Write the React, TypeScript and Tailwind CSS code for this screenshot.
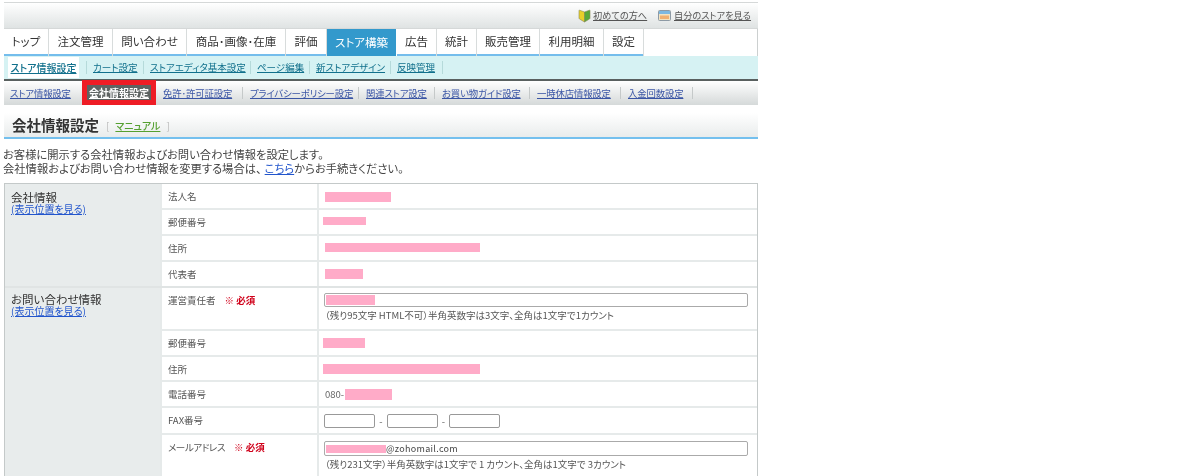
const font = '[font-family:"Noto_Sans_CJK_JP","Liberation_Sans",sans-serif] [font-feature-settings:"palt"]';

const tabs = [
  { label: "トップ", w: "w-[44px]" },
  { label: "注文管理", w: "w-[63px]" },
  { label: "問い合わせ", w: "w-[73px]" },
  { label: "商品･画像･在庫", w: "w-[98px]" },
  { label: "評価", w: "w-[40px]" },
  { label: "ストア構築", w: "w-[69px]", active: true },
  { label: "広告", w: "w-[39px]" },
  { label: "統計", w: "w-[39px]" },
  { label: "販売管理", w: "w-[62px]" },
  { label: "利用明細", w: "w-[63px]" },
  { label: "設定", w: "w-[39px]" },
];

const subNav = [
  { label: "カート設定", w: "w-[43px]" },
  { label: "ストアエディタ基本設定", w: "w-[93px]" },
  { label: "ページ編集", w: "w-[45px]" },
  { label: "新ストアデザイン", w: "w-[67px]" },
  { label: "反映管理", w: "w-[38px]" },
];

const pageNav = [
  { label: "免許･許可証設定", w: "w-[72px]" },
  { label: "プライバシーポリシー設定", w: "w-[101px]" },
  { label: "関連ストア設定", w: "w-[61px]" },
  { label: "お買い物ガイド設定", w: "w-[80px]" },
  { label: "一時休店情報設定", w: "w-[76px]" },
  { label: "入金回数設定", w: "w-[57px]" },
];

function Pink({ className }: { className: string }) {
  return <span className={`block bg-[#ffabc8] ${className}`} />;
}

function Required() {
  return <span className="ml-[9px] font-bold text-[#d0021b]">※ 必須</span>;
}

function Row({
  label,
  h,
  children,
  last,
}: {
  label: React.ReactNode;
  h: string;
  children: React.ReactNode;
  last?: boolean;
}) {
  return (
    <div className={`flex ${h} ${last ? "" : "border-b-2 border-[#e6eaea]"}`}>
      <div className="w-[155px] shrink-0 pl-[6px] pt-[5px] text-[9.5px] leading-[14px] text-[#555]">{label}</div>
      <div className="w-[2px] shrink-0 bg-[#e6eaea]" />
      <div className="min-w-0 flex-1">{children}</div>
    </div>
  );
}

function SectionHead({ title, pt }: { title: string; pt: string }) {
  return (
    <div className={`w-[155px] shrink-0 bg-[#e8ecec] pl-[6px] ${pt}`}>
      <div className="text-[11.5px] leading-[12px] text-[#333]">{title}</div>
      <a className="block text-[10px] leading-[11px] text-[#2255cc] underline">(表示位置を見る)</a>
    </div>
  );
}

function FaxInput() {
  return <span className="block h-[14px] w-[51px] rounded-[2px] border border-[#999] bg-white" />;
}

export default function App() {
  return (
    <div className={`h-[476px] w-[1200px] overflow-hidden bg-white pl-[4px] pt-[2px] blur-[0.3px] ${font}`}>
      <div className="w-[754px]">
        <div className="flex h-[27px] items-center justify-end border-y border-[#d5d8d8] bg-gradient-to-b from-white to-[#dfe3e3] pr-[7px] text-[9.2px] text-[#555]">
          <svg width="13" height="14" viewBox="0 0 13 14" className="mr-[2px]">
            <path d="M6.500 3 L6.500 13 L1.500 10 Q1 9.500 1 9 L1 1.500 Q1 1 1.600 1.200 Z" fill="#e8cf2a" stroke="#8a8a55" strokeWidth="0.6" />
            <path d="M6.500 3 L6.500 13 L11.500 10 Q12 9.500 12 9 L12 1.500 Q12 1 11.400 1.200 Z" fill="#57a83a" stroke="#8a8a55" strokeWidth="0.6" />
          </svg>
          <a className="w-[55px] whitespace-nowrap underline">初めての方へ</a>
          <svg width="13" height="11" viewBox="0 0 13 11" className="ml-[10px] mr-[3px]">
            <rect x="0.500" y="0.500" width="12" height="10" rx="1" fill="#f3e3c0" stroke="#8d9aa5" />
            <rect x="1" y="1" width="11" height="3" fill="#7db8e0" />
            <rect x="2" y="5.500" width="9" height="3.500" fill="#f0b070" />
          </svg>
          <a className="w-[77px] whitespace-nowrap underline">自分のストアを見る</a>
        </div>

        <div className="flex h-[27px] border-r border-[#ccd0d0] bg-white">
          {tabs.map((t) => (
            <div
              key={t.label}
              className={`${t.w} mr-px flex shrink-0 items-center justify-center text-[11.5px] ${
                t.active
                  ? "bg-[#3399cc] text-white"
                  : "border-b-2 border-[#74bdec] text-[#333] shadow-[1px_0_0_#d8dcdc]"
              }`}
            >
              {t.label}
            </div>
          ))}
        </div>

        <div className="flex h-[23px] items-center bg-[#d6f2f3] pl-[4px] text-[9.5px] text-[#11708c]">
          <span className="flex h-[21px] w-[71px] items-center justify-center bg-white text-[10px] font-medium underline">ストア情報設定</span>
          {subNav.map((s) => (
            <span key={s.label} className="ml-[7px] flex h-[13px] items-center border-l border-[#b5dada] pl-[6px] first-of-type:ml-[6px]">
              <a className={`${s.w} whitespace-nowrap underline`}>{s.label}</a>
            </span>
          ))}
          <span className="ml-[7px] h-[13px] border-l border-[#b5dada]" />
        </div>

        <div className="h-[2px] bg-[#59605f]" />

        <div className="flex h-[24px] items-center bg-gradient-to-b from-white to-[#d5d9d9] pl-[6px] text-[9.4px] tracking-[-0.15px] text-[#3a55a5]">
          <a className="w-[63px] whitespace-nowrap underline">ストア情報設定</a>
          <span className="z-10 ml-[9px] -mt-px flex h-[25px] w-[74px] items-center justify-center border-[5px] border-[#ee1c25] bg-[#5d6362] text-[10px] font-bold tracking-normal text-white underline">
            会社情報設定
          </span>
          {pageNav.map((p) => (
            <span key={p.label} className="ml-[7px] flex items-center">
              <a className={`${p.w} whitespace-nowrap underline`}>{p.label}</a>
              <span className="ml-[7px] h-[12px] border-l border-[#c5c9c9]" />
            </span>
          ))}
        </div>

        <div className="mt-[8px] flex h-[26px] items-center border-b-2 border-[#74c0ee] bg-gradient-to-b from-white to-[#e9ecec] pl-[8px]">
          <h1 className="text-[14.500px] font-bold text-[#333]">会社情報設定</h1>
          <span className="ml-[7px] text-[10px] text-[#bbb]">[</span>
          <a className="mx-[6px] text-[10px] font-medium text-[#55a030] underline">マニュアル</a>
          <span className="text-[10px] text-[#bbb]">]</span>
        </div>
      </div>

      <p className="-ml-px mt-[9px] text-[11.300px] leading-[13.500px] text-[#444]">
        お客様に開示する会社情報およびお問い合わせ情報を設定します。
        <br />
        会社情報およびお問い合わせ情報を変更する場合は、<a className="ml-[3px] text-[#2255cc] underline">こちら</a>からお手続きください。
      </p>

      <div className="mt-[8px] w-[754px] border border-[#c4c9c9]">
        <div className="flex border-b-2 border-[#e0e4e4]">
          <SectionHead title="会社情報" pt="pt-[7px]" />
          <div className="w-[2px] shrink-0 bg-[#e6eaea]" />
          <div className="flex-1">
            <Row label="法人名" h="h-[26px]">
              <Pink className="ml-[6px] mt-[8px] h-[10px] w-[66px]" />
            </Row>
            <Row label="郵便番号" h="h-[26px]">
              <Pink className="ml-[4px] mt-[7px] h-[8px] w-[43px]" />
            </Row>
            <Row label="住所" h="h-[26px]">
              <Pink className="ml-[6px] mt-[7px] h-[9px] w-[155px]" />
            </Row>
            <Row label="代表者" h="h-[24px]" last>
              <Pink className="ml-[6px] mt-[7px] h-[10px] w-[38px]" />
            </Row>
          </div>
        </div>

        <div className="flex">
          <SectionHead title="お問い合わせ情報" pt="pt-[5px]" />
          <div className="w-[2px] shrink-0 bg-[#e6eaea]" />
          <div className="flex-1">
            <Row
              label={
                <>
                  運営責任者
                  <Required />
                </>
              }
              h="h-[43px]"
            >
              <div className="ml-[5px] mt-[5px] h-[14px] w-[424px] rounded-[2px] border border-[#aaa] bg-white">
                <Pink className="ml-px mt-px h-[10px] w-[49px]" />
              </div>
              <p className="ml-[6px] mt-[2px] text-[9.500px] leading-[12px] text-[#555]">
                （残り95文字 HTML不可）半角英数字は3文字、全角は1文字で1カウント
              </p>
            </Row>
            <Row label="郵便番号" h="h-[26px]">
              <Pink className="ml-[4px] mt-[7px] h-[10px] w-[42px]" />
            </Row>
            <Row label="住所" h="h-[25px]">
              <Pink className="ml-[4px] mt-[7px] h-[10px] w-[157px]" />
            </Row>
            <Row label="電話番号" h="h-[26px]">
              <div className="ml-[6px] mt-[6px] flex items-center text-[9.500px] leading-[12px] text-[#666]">
                <span className="w-[20px]">080-</span>
                <Pink className="h-[11px] w-[47px]" />
              </div>
            </Row>
            <Row label="FAX番号" h="h-[27px]">
              <div className="ml-[5px] mt-[6px] flex items-center text-[9.500px] leading-[14px] text-[#666]">
                <FaxInput />
                <span className="w-[12px] text-center">-</span>
                <FaxInput />
                <span className="w-[11px] text-center">-</span>
                <FaxInput />
              </div>
            </Row>
            <Row
              label={
                <>
                  <span className="tracking-[-0.4px]">メールアドレス</span>
                  <Required />
                </>
              }
              h="h-[60px]"
              last
            >
              <div className="ml-[5px] mt-[6px] flex h-[15px] w-[424px] items-center rounded-[2px] border border-[#aaa] bg-white text-[9px] tracking-[0.3px] text-[#444]">
                <Pink className="ml-px h-[8px] w-[60px]" />
                @zohomail.com
              </div>
              <p className="ml-[6px] mt-[2px] text-[9.500px] leading-[12px] text-[#555]">
                （残り231文字）半角英数字は1文字で 1 カウント、全角は1文字で 3カウント
              </p>
            </Row>
          </div>
        </div>
      </div>
    </div>
  );
}
